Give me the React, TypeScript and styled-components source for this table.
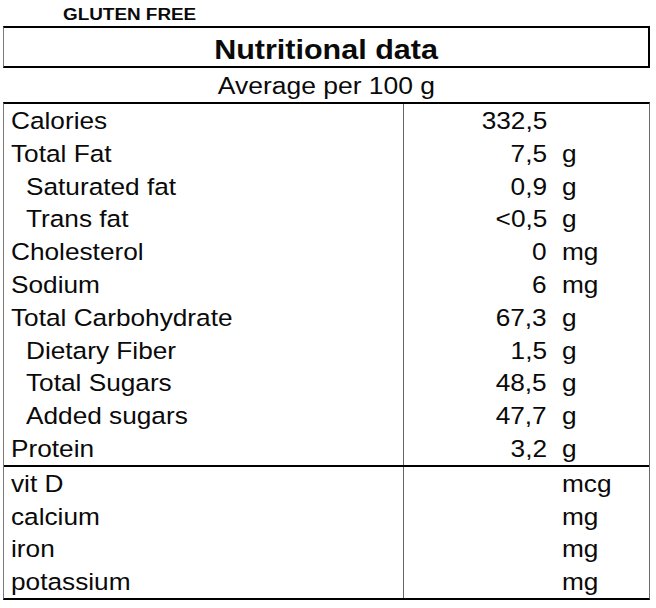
import React from 'react'
import styled, { createGlobalStyle } from 'styled-components'

const GlobalStyle = createGlobalStyle`
	html, body {
		margin: 0;
		padding: 0;
		background: #ffffff;
	}
`

const Page = styled.div`
	width: 656px;
	box-sizing: border-box;
	padding: 0 6px 0 3px;
	font-family: 'Liberation Sans', Arial, sans-serif;
	color: #0a0a0a;
`

// the scan is wider than plain Arial, so text is stretched sideways
const Stretch = styled.span<{ $x: number; $origin?: string }>`
	display: inline-block;
	transform: scaleX(${props => props.$x});
	transform-origin: ${props => props.$origin || 'left'} center;
	white-space: nowrap;
`

const Badge = styled.div`
	height: 26px;
	box-sizing: border-box;
	padding: 5px 0 0 60px;
	font-size: 16px;
	font-weight: 700;
	line-height: 20px;
`

const TitleBox = styled.div`
	height: 42px;
	box-sizing: border-box;
	border-top: 2px solid #000;
	border-bottom: 2px solid #000;
	border-right: 2px solid #000;
	border-left: 1px solid #7a7a7a;
	padding-top: 6px;
	text-align: center;
	font-size: 27px;
	font-weight: 700;
	line-height: 32px;
`

const Subtitle = styled.div`
	height: 34px;
	box-sizing: border-box;
	padding-top: 4px;
	text-align: center;
	font-size: 23px;
	line-height: 28px;
`

const Table = styled.div`
	border-top: 2px solid #000;
	border-bottom: 2px solid #000;
	border-left: 1px solid #7a7a7a;
	border-right: 1px solid #6a6a6a;
`

const Section = styled.div<{ $split?: boolean }>`
	border-top: ${props => (props.$split ? '2px solid #000' : 'none')};
`

const Row = styled.div`
	display: grid;
	grid-template-columns: 399px 1fr;
	height: 32.8px;
	font-size: 24.5px;
	line-height: 30.8px;
`

const Label = styled.div<{ $indent?: boolean }>`
	padding-left: ${props => (props.$indent ? '22px' : '7px')};
	padding-top: 2px;
`

const Value = styled.div`
	display: grid;
	grid-template-columns: 143px 15px 1fr;
	border-left: 1px solid #666;
	padding-top: 2px;
`

const Amount = styled.div`
	text-align: right;
`

const Unit = styled.div`
	grid-column: 3;
`

type Item = {
	name: string
	amount?: string
	unit?: string
	indent?: boolean
}

const nutrients: Item[] = [
	{ name: 'Calories', amount: '332,5' },
	{ name: 'Total Fat', amount: '7,5', unit: 'g' },
	{ name: 'Saturated fat', amount: '0,9', unit: 'g', indent: true },
	{ name: 'Trans fat', amount: '<0,5', unit: 'g', indent: true },
	{ name: 'Cholesterol', amount: '0', unit: 'mg' },
	{ name: 'Sodium', amount: '6', unit: 'mg' },
	{ name: 'Total Carbohydrate', amount: '67,3', unit: 'g' },
	{ name: 'Dietary Fiber', amount: '1,5', unit: 'g', indent: true },
	{ name: 'Total Sugars', amount: '48,5', unit: 'g', indent: true },
	{ name: 'Added sugars', amount: '47,7', unit: 'g', indent: true },
	{ name: 'Protein', amount: '3,2', unit: 'g' },
]

const minerals: Item[] = [
	{ name: 'vit D', unit: 'mcg' },
	{ name: 'calcium', unit: 'mg' },
	{ name: 'iron', unit: 'mg' },
	{ name: 'potassium', unit: 'mg' },
]

function NutrientRow({ item }: { item: Item }) {
	return (
		<Row>
			<Label $indent={item.indent}>
				<Stretch $x={1.07}>{item.name}</Stretch>
			</Label>
			<Value>
				<Amount>
					{item.amount && (
						<Stretch $x={1.07} $origin='right'>
							{item.amount}
						</Stretch>
					)}
				</Amount>
				<Unit>{item.unit && <Stretch $x={1.07}>{item.unit}</Stretch>}</Unit>
			</Value>
		</Row>
	)
}

function App() {
	return (
		<>
			<GlobalStyle />
			<Page>
				<Badge>
					<Stretch $x={1.18}>GLUTEN FREE</Stretch>
				</Badge>
				<TitleBox>
					<Stretch $x={1.13} $origin='center'>
						Nutritional data
					</Stretch>
				</TitleBox>
				<Subtitle>
					<Stretch $x={1.15} $origin='center'>
						Average per 100 g
					</Stretch>
				</Subtitle>
				<Table>
					<Section>
						{nutrients.map(item => (
							<NutrientRow key={item.name} item={item} />
						))}
					</Section>
					<Section $split>
						{minerals.map(item => (
							<NutrientRow key={item.name} item={item} />
						))}
					</Section>
				</Table>
			</Page>
		</>
	)
}

export default App
